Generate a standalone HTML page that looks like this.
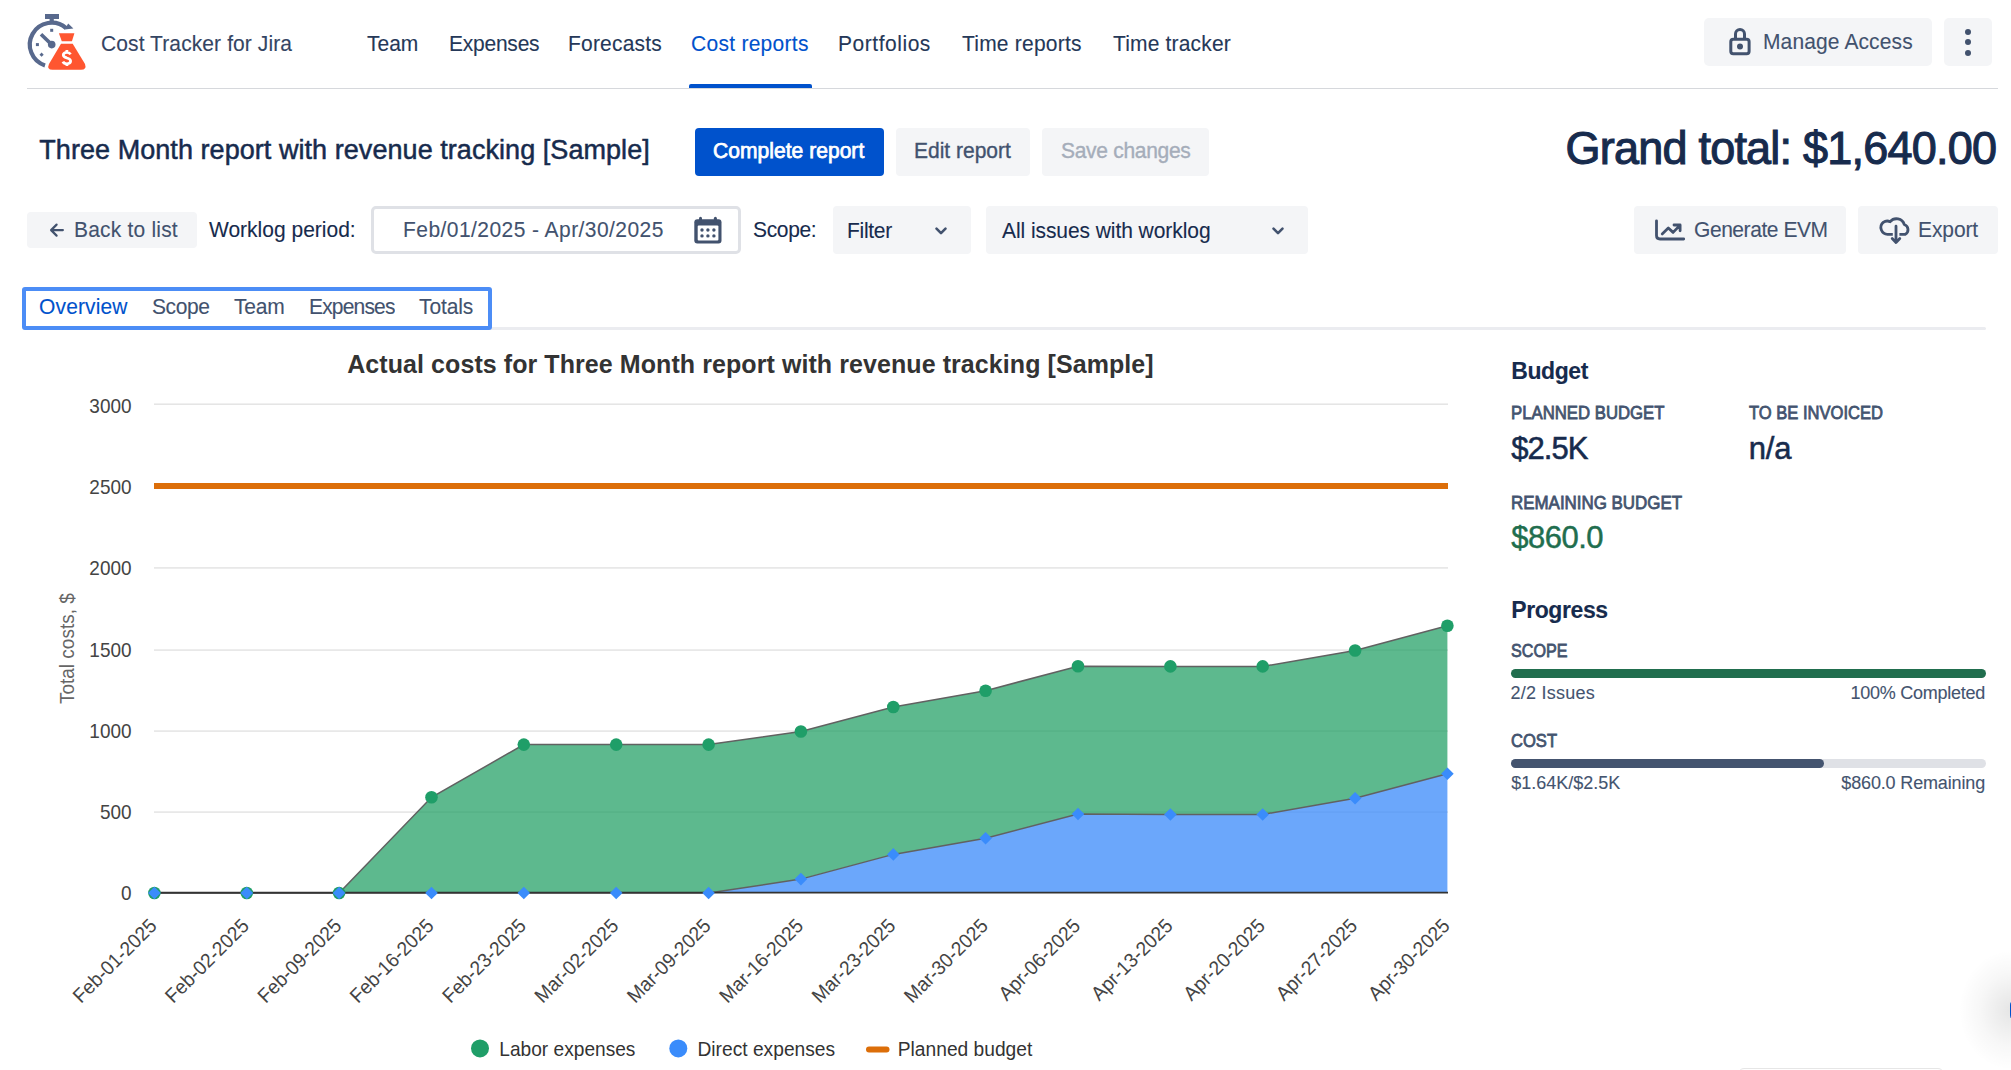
<!DOCTYPE html>
<html><head><meta charset="utf-8"><title>Cost Tracker for Jira</title>
<style>
html,body{margin:0;padding:0;background:#fff;}
body{width:2011px;height:1070px;position:relative;overflow:hidden;font-family:"Liberation Sans", sans-serif;}
.t{position:absolute;white-space:nowrap;font-family:"Liberation Sans", sans-serif;-webkit-text-stroke:0.1px currentColor;}
</style></head><body>
<svg style="position:absolute;left:0;top:0" width="100" height="80" viewBox="0 0 100 80">
 <g fill="#58698d">
  <rect x="45" y="14" width="14" height="5"/>
  <rect x="49.6" y="18" width="4.2" height="4"/>
  <rect x="50.2" y="28.8" width="3" height="3"/>
  <rect x="35.9" y="43.1" width="3" height="3"/>
  <rect x="40.1" y="53.2" width="3" height="3" transform="rotate(45 41.6 54.7)"/>
  <circle cx="51.7" cy="44.6" r="3.8"/>
 </g>
 <path d="M45.01,65.45 A21.9,21.9 0 1 1 66.07,28.07" fill="none" stroke="#58698d" stroke-width="4.2"/>
 <path d="M68.2,23.6 L73.4,28.6 L64.6,29.6 Z" fill="#58698d"/>
 <line x1="41" y1="34.2" x2="51.7" y2="44.6" stroke="#58698d" stroke-width="3.6"/>
 <g fill="#ff5630">
  <path d="M58.9,33.2 L74.4,33.2 L71.9,41.2 L61.8,41.2 Z"/>
  <path d="M61,43.7 L72.7,43.7 L85,64 Q87,69.8 81,69.8 L52.5,69.8 Q46.5,69.8 49,64 Z"/>
 </g>
 <path d="M70.5,54.3 C69.8,53 68.5,52.4 66.9,52.4 C64.8,52.4 63.3,53.5 63.3,55.1 C63.3,57 65.2,57.5 66.9,58 C68.8,58.5 70.6,59.1 70.6,61.1 C70.6,62.8 69,63.8 66.9,63.8 C65,63.8 63.6,63.1 62.9,61.6 M66.9,49.9 V52.8 M66.9,63.4 V65.9" fill="none" stroke="#fff" stroke-width="2.8"/>
</svg>
<div class="t" style="left:100.50px;top:33.50px;font-size:21.5px;line-height:21.5px;color:#344563;font-weight:400;letter-spacing:0.1px;transform:scaleX(0.9767);transform-origin:left center;">Cost Tracker for Jira</div>
<div class="t" style="left:367.30px;top:33.50px;font-size:21.5px;line-height:21.5px;color:#253858;font-weight:400;letter-spacing:0px;transform:scaleX(0.9767);transform-origin:left center;">Team</div>
<div class="t" style="left:448.60px;top:33.50px;font-size:21.5px;line-height:21.5px;color:#253858;font-weight:400;letter-spacing:-0.24px;transform:scaleX(0.9767);transform-origin:left center;">Expenses</div>
<div class="t" style="left:568.20px;top:33.50px;font-size:21.5px;line-height:21.5px;color:#253858;font-weight:400;letter-spacing:0.21px;transform:scaleX(0.9767);transform-origin:left center;">Forecasts</div>
<div class="t" style="left:691.00px;top:33.50px;font-size:21.5px;line-height:21.5px;color:#0052CC;font-weight:400;letter-spacing:0.28px;transform:scaleX(0.9767);transform-origin:left center;">Cost reports</div>
<div class="t" style="left:838.00px;top:33.50px;font-size:21.5px;line-height:21.5px;color:#253858;font-weight:400;letter-spacing:0.55px;transform:scaleX(0.9767);transform-origin:left center;">Portfolios</div>
<div class="t" style="left:961.80px;top:33.50px;font-size:21.5px;line-height:21.5px;color:#253858;font-weight:400;letter-spacing:0.22px;transform:scaleX(0.9767);transform-origin:left center;">Time reports</div>
<div class="t" style="left:1112.60px;top:33.50px;font-size:21.5px;line-height:21.5px;color:#253858;font-weight:400;letter-spacing:0.17px;transform:scaleX(0.9767);transform-origin:left center;">Time tracker</div>
<div style="position:absolute;left:689px;top:84px;width:123px;height:4px;background:#0052CC;border-radius:0px;border-radius:2px 2px 0 0;"></div>
<div style="position:absolute;left:27px;top:88px;width:1971px;height:1px;background:#d6d8dc;border-radius:0px;"></div>
<div style="position:absolute;left:1704px;top:18px;width:228px;height:48px;background:#F4F5F7;border-radius:5px;"></div>
<svg style="position:absolute;left:1720px;top:20px" width="40" height="50" viewBox="0 0 40 50">
 <rect x="10.8" y="19.3" width="18.3" height="14.5" rx="2.5" fill="none" stroke="#42526E" stroke-width="3"/>
 <path d="M15.5,19.3 V14 A4.5,4.5 0 0 1 24.5,14 V19.3" fill="none" stroke="#42526E" stroke-width="3"/>
 <circle cx="20" cy="26.4" r="3" fill="#42526E"/>
</svg>
<div class="t" style="left:1763.00px;top:31.80px;font-size:21.5px;line-height:21.5px;color:#42526E;font-weight:400;letter-spacing:0.12px;transform:scaleX(0.9767);transform-origin:left center;">Manage Access</div>
<div style="position:absolute;left:1944px;top:18px;width:48px;height:48px;background:#F4F5F7;border-radius:5px;"></div>
<div style="position:absolute;left:1965px;top:28.5px;width:6px;height:6px;border-radius:3px;background:#42526E"></div>
<div style="position:absolute;left:1965px;top:39px;width:6px;height:6px;border-radius:3px;background:#42526E"></div>
<div style="position:absolute;left:1965px;top:49.5px;width:6px;height:6px;border-radius:3px;background:#42526E"></div>
<div class="t" style="left:39.30px;top:137.34px;font-size:27px;line-height:27px;color:#172B4D;font-weight:400;letter-spacing:0.055px;-webkit-text-stroke:0.5px #172B4D;">Three Month report with revenue tracking [Sample]</div>
<div style="position:absolute;left:695px;top:128px;width:189px;height:48px;background:#0052CC;border-radius:4px;"></div>
<div class="t" style="left:713.20px;top:141.10px;font-size:21.5px;line-height:21.5px;color:#fff;font-weight:400;letter-spacing:0.05px;transform:scaleX(0.9767);transform-origin:left center;-webkit-text-stroke:0.75px #fff;">Complete report</div>
<div style="position:absolute;left:896px;top:128px;width:134px;height:48px;background:#F4F5F7;border-radius:4px;"></div>
<div class="t" style="left:914.30px;top:141.40px;font-size:21.5px;line-height:21.5px;color:#42526E;font-weight:400;transform:scaleX(0.9767);transform-origin:left center;-webkit-text-stroke:0.35px #42526E;">Edit report</div>
<div style="position:absolute;left:1042px;top:128px;width:167px;height:48px;background:#F4F5F7;border-radius:4px;"></div>
<div class="t" style="left:1060.70px;top:141.40px;font-size:21.5px;line-height:21.5px;color:#A5ADBA;font-weight:400;letter-spacing:-0.3px;transform:scaleX(0.9767);transform-origin:left center;-webkit-text-stroke:0.35px #A5ADBA;">Save changes</div>
<div class="t" style="right:14.80px;top:125.36px;font-size:46px;line-height:46px;color:#172B4D;font-weight:400;letter-spacing:-0.8px;transform:scaleX(0.9783);transform-origin:right center;-webkit-text-stroke:1.1px #172B4D;">Grand total: $1,640.00</div>
<div style="position:absolute;left:27px;top:212px;width:170px;height:36px;background:#F4F5F7;border-radius:4px;"></div>
<svg style="position:absolute;left:40px;top:215px" width="30" height="30" viewBox="0 0 30 30">
 <path d="M22.9,15.1 H11.6 M16.6,9.6 L11.1,15.1 L16.6,20.6" fill="none" stroke="#42526E" stroke-width="2.2" stroke-linecap="round" stroke-linejoin="round"/>
</svg>
<div class="t" style="left:74.20px;top:219.50px;font-size:21.5px;line-height:21.5px;color:#42526E;font-weight:400;letter-spacing:0.2px;transform:scaleX(0.9767);transform-origin:left center;">Back to list</div>
<div class="t" style="left:208.80px;top:219.80px;font-size:21.5px;line-height:21.5px;color:#172B4D;font-weight:400;transform:scaleX(0.9767);transform-origin:left center;">Worklog period:</div>
<div style="position:absolute;left:371px;top:206px;width:364px;height:42px;border:3px solid #DFE1E6;border-radius:5px;background:#fff"></div>
<div class="t" style="left:402.60px;top:219.80px;font-size:21.5px;line-height:21.5px;color:#42526E;font-weight:400;letter-spacing:0.45px;transform:scaleX(0.9767);transform-origin:left center;">Feb/01/2025 - Apr/30/2025</div>
<svg style="position:absolute;left:690px;top:212px" width="36" height="36" viewBox="0 0 36 36">
 <rect x="4.3" y="7.3" width="27.2" height="24.1" rx="3" fill="#42526E"/>
 <rect x="7.7" y="13.5" width="20.7" height="14.9" rx="1" fill="#fff"/>
 <rect x="9" y="4.7" width="3" height="6" rx="1.5" fill="#42526E"/>
 <rect x="23.9" y="4.7" width="3" height="6" rx="1.5" fill="#42526E"/>
 <g fill="#42526E">
  <circle cx="12" cy="18" r="1.7"/><circle cx="17.9" cy="18" r="1.7"/><circle cx="23.9" cy="18" r="1.7"/>
  <circle cx="12" cy="23.9" r="1.7"/><circle cx="17.9" cy="23.9" r="1.7"/><circle cx="23.9" cy="23.9" r="1.7"/>
 </g>
</svg>
<div class="t" style="left:753.40px;top:219.80px;font-size:21.5px;line-height:21.5px;color:#172B4D;font-weight:400;letter-spacing:-0.35px;transform:scaleX(0.9767);transform-origin:left center;">Scope:</div>
<div style="position:absolute;left:833px;top:206px;width:138px;height:48px;background:#F4F5F7;border-radius:4px;"></div>
<div class="t" style="left:847.00px;top:221.40px;font-size:21.5px;line-height:21.5px;color:#172B4D;font-weight:400;letter-spacing:-0.3px;transform:scaleX(0.9767);transform-origin:left center;">Filter</div>
<svg style="position:absolute;left:933px;top:225px" width="16" height="12" viewBox="0 0 16 12"><path d="M3.5,3.7 L8,8.2 L12.5,3.7" fill="none" stroke="#42526E" stroke-width="2.6" stroke-linecap="round" stroke-linejoin="round"/></svg>
<div style="position:absolute;left:986px;top:206px;width:322px;height:48px;background:#F4F5F7;border-radius:4px;"></div>
<div class="t" style="left:1002.20px;top:221.40px;font-size:21.5px;line-height:21.5px;color:#172B4D;font-weight:400;letter-spacing:-0.07px;transform:scaleX(0.9767);transform-origin:left center;">All issues with worklog</div>
<svg style="position:absolute;left:1270px;top:225px" width="16" height="12" viewBox="0 0 16 12"><path d="M3.5,3.7 L8,8.2 L12.5,3.7" fill="none" stroke="#42526E" stroke-width="2.6" stroke-linecap="round" stroke-linejoin="round"/></svg>
<div style="position:absolute;left:1634px;top:206px;width:212px;height:48px;background:#F4F5F7;border-radius:4px;"></div>
<svg style="position:absolute;left:1640px;top:200px" width="60" height="60" viewBox="0 0 60 60">
 <path d="M16.5,20.8 V35.5 Q16.5,39 20,39 H43.7" fill="none" stroke="#42526E" stroke-width="2.8" stroke-linecap="round" stroke-linejoin="round"/>
 <path d="M22.2,33.9 L28.3,28.0 L33.1,32.4 L40.1,25.1 M34,25.0 H40.1 V30.8" fill="none" stroke="#42526E" stroke-width="2.8" stroke-linecap="round" stroke-linejoin="round"/>
</svg>
<div class="t" style="left:1694.00px;top:219.80px;font-size:21.5px;line-height:21.5px;color:#42526E;font-weight:400;letter-spacing:-0.45px;transform:scaleX(0.9767);transform-origin:left center;">Generate EVM</div>
<div style="position:absolute;left:1858px;top:206px;width:140px;height:48px;background:#F4F5F7;border-radius:4px;"></div>
<svg style="position:absolute;left:1867px;top:200px" width="60" height="60" viewBox="0 0 60 60">
 <path d="M25.8,34.3 H21 A6.8,6.8 0 0 1 16.2,22.4 A7,7 0 0 1 23.2,21.7 A8.2,8.2 0 0 1 37.3,24.5 A5.4,5.4 0 0 1 38.3,34.3 H32.4" fill="none" stroke="#42526E" stroke-width="2.8" stroke-linejoin="round"/>
 <path d="M29,26.2 V42 M25.2,38.6 L29,42.5 L32.8,38.6" fill="none" stroke="#42526E" stroke-width="2.8" stroke-linecap="round" stroke-linejoin="round"/>
</svg>
<div class="t" style="left:1917.80px;top:219.80px;font-size:21.5px;line-height:21.5px;color:#42526E;font-weight:400;letter-spacing:-0.1px;transform:scaleX(0.9767);transform-origin:left center;">Export</div>
<div style="position:absolute;left:485px;top:327px;width:1501px;height:3px;background:#EBECF0;border-radius:1.5px;"></div>
<div style="position:absolute;left:22px;top:287px;width:461.5px;height:35px;border:4px solid #4C8DF6;border-radius:3px"></div>
<div class="t" style="left:39.30px;top:296.70px;font-size:21.5px;line-height:21.5px;color:#0052CC;font-weight:400;letter-spacing:0.15px;transform:scaleX(0.9767);transform-origin:left center;">Overview</div>
<div class="t" style="left:152.10px;top:296.70px;font-size:21.5px;line-height:21.5px;color:#42526E;font-weight:400;letter-spacing:-0.4px;transform:scaleX(0.9767);transform-origin:left center;">Scope</div>
<div class="t" style="left:233.90px;top:296.70px;font-size:21.5px;line-height:21.5px;color:#42526E;font-weight:400;letter-spacing:-0.2px;transform:scaleX(0.9767);transform-origin:left center;">Team</div>
<div class="t" style="left:308.70px;top:296.70px;font-size:21.5px;line-height:21.5px;color:#42526E;font-weight:400;letter-spacing:-0.85px;transform:scaleX(0.9767);transform-origin:left center;">Expenses</div>
<div class="t" style="left:419.00px;top:296.70px;font-size:21.5px;line-height:21.5px;color:#42526E;font-weight:400;letter-spacing:-0.1px;transform:scaleX(0.9767);transform-origin:left center;">Totals</div>
<div class="t" style="left:1511.20px;top:359.93px;font-size:23px;line-height:23px;color:#172B4D;font-weight:700;letter-spacing:-0.4px;">Budget</div>
<div class="t" style="left:1511.00px;top:404.06px;font-size:18px;line-height:18px;color:#44546F;font-weight:400;transform:scaleX(0.9300);transform-origin:left center;-webkit-text-stroke:0.8px #44546F;">PLANNED BUDGET</div>
<div class="t" style="left:1748.60px;top:404.06px;font-size:18px;line-height:18px;color:#44546F;font-weight:400;transform:scaleX(0.9200);transform-origin:left center;-webkit-text-stroke:0.8px #44546F;">TO BE INVOICED</div>
<div class="t" style="left:1511.20px;top:432.66px;font-size:31px;line-height:31px;color:#172B4D;font-weight:400;letter-spacing:-0.95px;-webkit-text-stroke:0.55px #172B4D;">$2.5K</div>
<div class="t" style="left:1748.80px;top:432.66px;font-size:31px;line-height:31px;color:#172B4D;font-weight:400;letter-spacing:-0.2px;-webkit-text-stroke:0.55px #172B4D;">n/a</div>
<div class="t" style="left:1511.00px;top:493.76px;font-size:18px;line-height:18px;color:#44546F;font-weight:400;transform:scaleX(0.9400);transform-origin:left center;-webkit-text-stroke:0.8px #44546F;">REMAINING BUDGET</div>
<div class="t" style="left:1511.20px;top:522.36px;font-size:31px;line-height:31px;color:#216E4E;font-weight:400;letter-spacing:-0.5px;-webkit-text-stroke:0.45px #216E4E;">$860.0</div>
<div class="t" style="left:1511.20px;top:599.13px;font-size:23px;line-height:23px;color:#172B4D;font-weight:700;letter-spacing:-0.4px;">Progress</div>
<div class="t" style="left:1511.00px;top:641.86px;font-size:18px;line-height:18px;color:#44546F;font-weight:400;transform:scaleX(0.8950);transform-origin:left center;-webkit-text-stroke:0.8px #44546F;">SCOPE</div>
<div style="position:absolute;left:1511px;top:669px;width:475px;height:9px;background:#216E4E;border-radius:4.5px;"></div>
<div class="t" style="left:1510.50px;top:684.16px;font-size:18px;line-height:18px;color:#44546F;font-weight:400;letter-spacing:0.24px;">2/2 Issues</div>
<div class="t" style="right:26.00px;top:684.16px;font-size:18px;line-height:18px;color:#44546F;font-weight:400;letter-spacing:-0.25px;">100% Completed</div>
<div class="t" style="left:1511.00px;top:731.66px;font-size:18px;line-height:18px;color:#44546F;font-weight:400;transform:scaleX(0.9200);transform-origin:left center;-webkit-text-stroke:0.8px #44546F;">COST</div>
<div style="position:absolute;left:1511px;top:759px;width:475px;height:9px;background:#DFE1E6;border-radius:4.5px;"></div>
<div style="position:absolute;left:1511px;top:759px;width:313px;height:9px;background:#44546F;border-radius:4.5px;"></div>
<div class="t" style="left:1511.20px;top:773.76px;font-size:18px;line-height:18px;color:#44546F;font-weight:400;">$1.64K/$2.5K</div>
<div class="t" style="right:26.00px;top:773.76px;font-size:18px;line-height:18px;color:#44546F;font-weight:400;letter-spacing:-0.15px;">$860.0 Remaining</div>
<svg style="position:absolute;left:0;top:0" width="2011" height="1070" viewBox="0 0 2011 1070">
<text x="347.2" y="372.8" font-family="Liberation Sans" font-weight="700" font-size="25" letter-spacing="0.076" fill="#333">Actual costs for Three Month report with revenue tracking [Sample]</text>
<rect x="154" y="403.45" width="1294" height="1.5" fill="#e4e4e4"/>
<text transform="translate(131.60 412.75) rotate(0) scale(0.95 1)" x="0" y="0" font-family="Liberation Sans" font-size="20" fill="#444" text-anchor="end">3000</text>
<rect x="154" y="485.25" width="1294" height="1.5" fill="#e4e4e4"/>
<text transform="translate(131.60 493.85) rotate(0) scale(0.95 1)" x="0" y="0" font-family="Liberation Sans" font-size="20" fill="#444" text-anchor="end">2500</text>
<rect x="154" y="567.15" width="1294" height="1.5" fill="#e4e4e4"/>
<text transform="translate(131.60 574.75) rotate(0) scale(0.95 1)" x="0" y="0" font-family="Liberation Sans" font-size="20" fill="#444" text-anchor="end">2000</text>
<rect x="154" y="649.35" width="1294" height="1.5" fill="#e4e4e4"/>
<text transform="translate(131.60 656.85) rotate(0) scale(0.95 1)" x="0" y="0" font-family="Liberation Sans" font-size="20" fill="#444" text-anchor="end">1500</text>
<rect x="154" y="730.35" width="1294" height="1.5" fill="#e4e4e4"/>
<text transform="translate(131.60 737.85) rotate(0) scale(0.95 1)" x="0" y="0" font-family="Liberation Sans" font-size="20" fill="#444" text-anchor="end">1000</text>
<rect x="154" y="811.35" width="1294" height="1.5" fill="#e4e4e4"/>
<text transform="translate(131.60 818.75) rotate(0) scale(0.95 1)" x="0" y="0" font-family="Liberation Sans" font-size="20" fill="#444" text-anchor="end">500</text>
<text transform="translate(131.60 899.85) rotate(0) scale(0.95 1)" x="0" y="0" font-family="Liberation Sans" font-size="20" fill="#444" text-anchor="end">0</text>
<polygon points="154.4,893.0 246.8,893.0 339.1,893.0 431.5,797.3 523.8,744.6 616.2,744.6 708.6,744.6 800.9,731.5 893.3,707.0 985.6,690.7 1078.0,666.2 1170.4,666.4 1262.7,666.4 1355.1,650.5 1447.4,625.8 1447.4,773.8 1355.1,798.2 1262.7,814.5 1170.4,814.5 1078.0,814.0 985.6,838.3 893.3,854.4 800.9,879.1 708.6,893.0 616.2,893.0 523.8,893.0 431.5,893.0 339.1,893.0 246.8,893.0 154.4,893.0" fill="#1e9e63" fill-opacity="0.72"/>
<polygon points="154.4,893.0 246.8,893.0 339.1,893.0 431.5,893.0 523.8,893.0 616.2,893.0 708.6,893.0 800.9,879.1 893.3,854.4 985.6,838.3 1078.0,814.0 1170.4,814.5 1262.7,814.5 1355.1,798.2 1447.4,773.8 1447.4,893 154.4,893" fill="#3d8bfa" fill-opacity="0.76"/>
<polyline points="154.4,893.0 246.8,893.0 339.1,893.0 431.5,797.3 523.8,744.6 616.2,744.6 708.6,744.6 800.9,731.5 893.3,707.0 985.6,690.7 1078.0,666.2 1170.4,666.4 1262.7,666.4 1355.1,650.5 1447.4,625.8" fill="none" stroke="#616161" stroke-width="1.5"/>
<polyline points="154.4,893.0 246.8,893.0 339.1,893.0 431.5,893.0 523.8,893.0 616.2,893.0 708.6,893.0 800.9,879.1 893.3,854.4 985.6,838.3 1078.0,814.0 1170.4,814.5 1262.7,814.5 1355.1,798.2 1447.4,773.8" fill="none" stroke="#616161" stroke-width="1.5"/>
<line x1="154" y1="892.6" x2="1448" y2="892.6" stroke="#333" stroke-width="1.8"/>
<rect x="154" y="483" width="1294" height="6" fill="#dc6e09"/>
<circle cx="154.4" cy="893.0" r="6.3" fill="#1f9e68"/>
<circle cx="246.8" cy="893.0" r="6.3" fill="#1f9e68"/>
<circle cx="339.1" cy="893.0" r="6.3" fill="#1f9e68"/>
<circle cx="431.5" cy="797.3" r="6.3" fill="#1f9e68"/>
<circle cx="523.8" cy="744.6" r="6.3" fill="#1f9e68"/>
<circle cx="616.2" cy="744.6" r="6.3" fill="#1f9e68"/>
<circle cx="708.6" cy="744.6" r="6.3" fill="#1f9e68"/>
<circle cx="800.9" cy="731.5" r="6.3" fill="#1f9e68"/>
<circle cx="893.3" cy="707.0" r="6.3" fill="#1f9e68"/>
<circle cx="985.6" cy="690.7" r="6.3" fill="#1f9e68"/>
<circle cx="1078.0" cy="666.2" r="6.3" fill="#1f9e68"/>
<circle cx="1170.4" cy="666.4" r="6.3" fill="#1f9e68"/>
<circle cx="1262.7" cy="666.4" r="6.3" fill="#1f9e68"/>
<circle cx="1355.1" cy="650.5" r="6.3" fill="#1f9e68"/>
<circle cx="1447.4" cy="625.8" r="6.3" fill="#1f9e68"/>
<path d="M154.4,886.7 L160.7,893.0 L154.4,899.3 L148.1,893.0 Z" fill="#3a8cfb"/>
<path d="M246.8,886.7 L253.1,893.0 L246.8,899.3 L240.5,893.0 Z" fill="#3a8cfb"/>
<path d="M339.1,886.7 L345.4,893.0 L339.1,899.3 L332.8,893.0 Z" fill="#3a8cfb"/>
<path d="M431.5,886.7 L437.8,893.0 L431.5,899.3 L425.2,893.0 Z" fill="#3a8cfb"/>
<path d="M523.8,886.7 L530.1,893.0 L523.8,899.3 L517.5,893.0 Z" fill="#3a8cfb"/>
<path d="M616.2,886.7 L622.5,893.0 L616.2,899.3 L609.9,893.0 Z" fill="#3a8cfb"/>
<path d="M708.6,886.7 L714.9,893.0 L708.6,899.3 L702.3,893.0 Z" fill="#3a8cfb"/>
<path d="M800.9,872.8 L807.2,879.1 L800.9,885.4 L794.6,879.1 Z" fill="#3a8cfb"/>
<path d="M893.3,848.1 L899.6,854.4 L893.3,860.7 L887.0,854.4 Z" fill="#3a8cfb"/>
<path d="M985.6,832.0 L991.9,838.3 L985.6,844.6 L979.3,838.3 Z" fill="#3a8cfb"/>
<path d="M1078.0,807.7 L1084.3,814.0 L1078.0,820.3 L1071.7,814.0 Z" fill="#3a8cfb"/>
<path d="M1170.4,808.2 L1176.7,814.5 L1170.4,820.8 L1164.1,814.5 Z" fill="#3a8cfb"/>
<path d="M1262.7,808.2 L1269.0,814.5 L1262.7,820.8 L1256.4,814.5 Z" fill="#3a8cfb"/>
<path d="M1355.1,791.9 L1361.4,798.2 L1355.1,804.5 L1348.8,798.2 Z" fill="#3a8cfb"/>
<path d="M1447.4,767.5 L1453.7,773.8 L1447.4,780.1 L1441.1,773.8 Z" fill="#3a8cfb"/>
<text transform="translate(157.90 927.00) rotate(-45) scale(0.95 1)" x="0" y="0" font-family="Liberation Sans" font-size="20" fill="#444" text-anchor="end">Feb-01-2025</text>
<text transform="translate(250.26 927.00) rotate(-45) scale(0.95 1)" x="0" y="0" font-family="Liberation Sans" font-size="20" fill="#444" text-anchor="end">Feb-02-2025</text>
<text transform="translate(342.62 927.00) rotate(-45) scale(0.95 1)" x="0" y="0" font-family="Liberation Sans" font-size="20" fill="#444" text-anchor="end">Feb-09-2025</text>
<text transform="translate(434.98 927.00) rotate(-45) scale(0.95 1)" x="0" y="0" font-family="Liberation Sans" font-size="20" fill="#444" text-anchor="end">Feb-16-2025</text>
<text transform="translate(527.34 927.00) rotate(-45) scale(0.95 1)" x="0" y="0" font-family="Liberation Sans" font-size="20" fill="#444" text-anchor="end">Feb-23-2025</text>
<text transform="translate(619.70 927.00) rotate(-45) scale(0.95 1)" x="0" y="0" font-family="Liberation Sans" font-size="20" fill="#444" text-anchor="end">Mar-02-2025</text>
<text transform="translate(712.06 927.00) rotate(-45) scale(0.95 1)" x="0" y="0" font-family="Liberation Sans" font-size="20" fill="#444" text-anchor="end">Mar-09-2025</text>
<text transform="translate(804.42 927.00) rotate(-45) scale(0.95 1)" x="0" y="0" font-family="Liberation Sans" font-size="20" fill="#444" text-anchor="end">Mar-16-2025</text>
<text transform="translate(896.78 927.00) rotate(-45) scale(0.95 1)" x="0" y="0" font-family="Liberation Sans" font-size="20" fill="#444" text-anchor="end">Mar-23-2025</text>
<text transform="translate(989.14 927.00) rotate(-45) scale(0.95 1)" x="0" y="0" font-family="Liberation Sans" font-size="20" fill="#444" text-anchor="end">Mar-30-2025</text>
<text transform="translate(1081.50 927.00) rotate(-45) scale(0.95 1)" x="0" y="0" font-family="Liberation Sans" font-size="20" fill="#444" text-anchor="end">Apr-06-2025</text>
<text transform="translate(1173.86 927.00) rotate(-45) scale(0.95 1)" x="0" y="0" font-family="Liberation Sans" font-size="20" fill="#444" text-anchor="end">Apr-13-2025</text>
<text transform="translate(1266.22 927.00) rotate(-45) scale(0.95 1)" x="0" y="0" font-family="Liberation Sans" font-size="20" fill="#444" text-anchor="end">Apr-20-2025</text>
<text transform="translate(1358.58 927.00) rotate(-45) scale(0.95 1)" x="0" y="0" font-family="Liberation Sans" font-size="20" fill="#444" text-anchor="end">Apr-27-2025</text>
<text transform="translate(1450.94 927.00) rotate(-45) scale(0.95 1)" x="0" y="0" font-family="Liberation Sans" font-size="20" fill="#444" text-anchor="end">Apr-30-2025</text>
<text transform="translate(74.20 648.60) rotate(-90) scale(0.95 1)" x="0" y="0" font-family="Liberation Sans" font-size="20" fill="#666" text-anchor="middle">Total costs, $</text>
<circle cx="480" cy="1048.4" r="9" fill="#1f9e68"/>
<text transform="translate(499.30 1056.00) rotate(0) scale(0.957 1)" x="0" y="0" font-family="Liberation Sans" font-size="20" fill="#333" text-anchor="start">Labor expenses</text>
<circle cx="678.3" cy="1048.4" r="9" fill="#3a8cfb"/>
<text transform="translate(697.50 1056.00) rotate(0) scale(0.96 1)" x="0" y="0" font-family="Liberation Sans" font-size="20" fill="#333" text-anchor="start">Direct expenses</text>
<line x1="869" y1="1049.5" x2="886.5" y2="1049.5" stroke="#dc6e09" stroke-width="6" stroke-linecap="round"/>
<text transform="translate(897.80 1056.00) rotate(0) scale(0.96 1)" x="0" y="0" font-family="Liberation Sans" font-size="20" fill="#333" text-anchor="start">Planned budget</text>
</svg>
<div style="position:absolute;left:1960px;top:950px;width:51px;height:120px;background:radial-gradient(ellipse 52px 60px at 51px 60px, rgba(0,0,0,0.10), rgba(0,0,0,0.03) 60%, rgba(0,0,0,0) 100%)"></div>
<div style="position:absolute;left:2010px;top:1001px;width:12px;height:17.5px;background:#0052CC;border-radius:4px"></div>
<div style="position:absolute;left:1738px;top:1068px;width:204px;height:20px;border:1.5px solid #e6e6e6;border-radius:6px 6px 0 0"></div>

</body></html>
